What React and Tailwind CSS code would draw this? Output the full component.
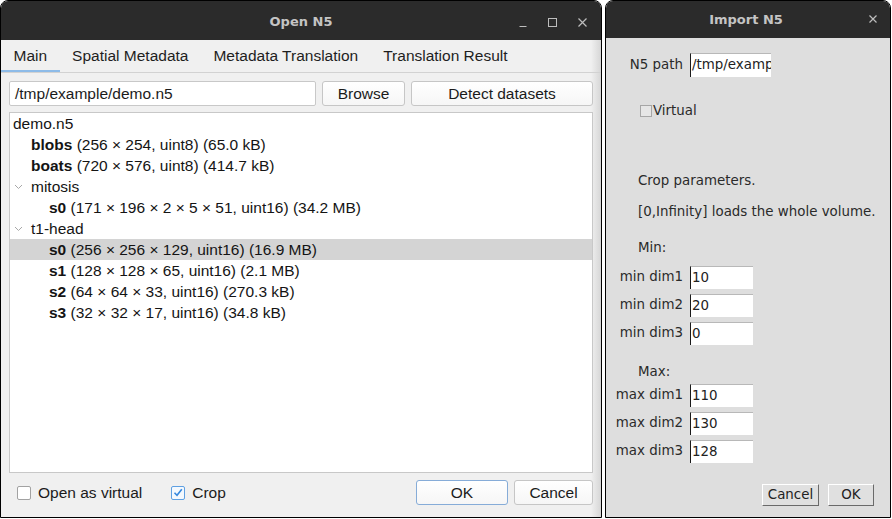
import React from 'react';

const TREE = [
  { level: 0, name: 'demo.n5' },
  { level: 1, bold: 'blobs', info: '(256 × 254, uint8) (65.0 kB)' },
  { level: 1, bold: 'boats', info: '(720 × 576, uint8) (414.7 kB)' },
  { level: 1, name: 'mitosis', chevron: true },
  { level: 2, bold: 's0', info: '(171 × 196 × 2 × 5 × 51, uint16) (34.2 MB)' },
  { level: 1, name: 't1-head', chevron: true },
  { level: 2, bold: 's0', info: '(256 × 256 × 129, uint16) (16.9 MB)', selected: true },
  { level: 2, bold: 's1', info: '(128 × 128 × 65, uint16) (2.1 MB)' },
  { level: 2, bold: 's2', info: '(64 × 64 × 33, uint16) (270.3 kB)' },
  { level: 2, bold: 's3', info: '(32 × 32 × 17, uint16) (34.8 kB)' },
];

const TABS = ['Main', 'Spatial Metadata', 'Metadata Translation', 'Translation Result'];

const MIN = [['min dim1', '10'], ['min dim2', '20'], ['min dim3', '0']];
const MAX = [['max dim1', '110'], ['max dim2', '130'], ['max dim3', '128']];

function Chevron() {
  return (
    <svg width="9" height="6" viewBox="0 0 9 6" className="ml-px">
      <path d="M1 1 L4.5 4.5 L8 1" fill="none" stroke="#a8a8a8" strokeWidth="1" />
    </svg>
  );
}

function QtButton({ children, className = '' }) {
  return (
    <button className={`h-full rounded-[3px] border bg-gradient-to-b from-white to-[#f6f6f6] text-[#1b1b1b] ${className}`}>
      {children}
    </button>
  );
}

function AwtField({ value, width = 'w-[63px]' }) {
  return (
    <div className={`${width} h-full bg-white border-l-[1.5px] border-l-[#1a1a1a] border-t border-t-[#b8b8b8] pl-[1px] flex items-center overflow-hidden whitespace-nowrap text-[#222]`}>
      {value}
    </div>
  );
}

function AwtButton({ children, className = '' }) {
  return (
    <button className={`h-full bg-[#e0e0e0] border-t border-l border-t-white border-l-white border-b-[1.5px] border-r-[1.5px] border-b-[#6a6a6a] border-r-[#6a6a6a] text-[#222] ${className}`}>
      {children}
    </button>
  );
}

function AwtRow({ label, value, width }) {
  return (
    <div className="h-[23px] flex items-center">
      <span className="w-[84px] text-right pr-[7px]">{label}</span>
      <AwtField value={value} width={width} />
    </div>
  );
}

export default function App() {
  return (
    <div className="w-[892px] h-[519px] bg-white flex gap-[3px] overflow-hidden">
      {/* Open N5 (Qt) */}
      <div className="w-[602px] h-[518px] border border-black rounded-t-[8px] overflow-hidden flex flex-col font-['Liberation_Sans',sans-serif] text-[15.5px]">
        <div className="h-[39px] shrink-0 bg-[#2b2b2b] relative flex items-center justify-center">
          <span className="font-['DejaVu_Sans',sans-serif] font-bold text-[13px] text-[#c4c4c4] mt-[2px]">Open N5</span>
          <div className="absolute right-[14px] top-[16px] flex items-center gap-[21px]">
            <svg width="8" height="10" viewBox="0 0 8 10"><path d="M0.5 9.5 H7.5" stroke="#bdbdbd" strokeWidth="1.2" /></svg>
            <svg width="9" height="9" viewBox="0 0 9 9"><rect x="0.5" y="0.5" width="8" height="8" fill="none" stroke="#bdbdbd" strokeWidth="1" /></svg>
            <svg width="9" height="9" viewBox="0 0 9 9"><path d="M0.5 0.5 L8.5 8.5 M8.5 0.5 L0.5 8.5" stroke="#bdbdbd" strokeWidth="1.2" /></svg>
          </div>
        </div>

        <div className="flex-1 flex flex-col bg-[linear-gradient(to_right,#f0f0f0_590px,#d6d6d6_600px)]">
          {/* Tabs */}
          <div className="h-[33px] shrink-0 flex border-b border-[#d2d2d2]">
            {TABS.map((t, i) => (
              <div key={t} className={`px-[12.5px] flex items-center text-[#1e1e1e] ${i === 0 ? 'border-b-2 border-[#8dbbe8] pt-[2px]' : ''}`}>
                {t}
              </div>
            ))}
          </div>

          <div className="pl-[8px] pr-[8px] flex flex-col flex-1">
            {/* Path row */}
            <div className="mt-[8px] h-[25px] flex gap-[6px]">
              <div className="w-[307px] h-full bg-white border border-[#c8c8c8] rounded-[2px] px-[5px] flex items-center text-[#1b1b1b]">
                /tmp/example/demo.n5
              </div>
              <QtButton className="w-[83px] border-[#c6c6c6]">Browse</QtButton>
              <QtButton className="w-[182px] border-[#c6c6c6]">Detect datasets</QtButton>
            </div>

            {/* Tree */}
            <div className="mt-[6px] h-[361px] bg-white border border-[#c8c8c8]">
              {TREE.map((r, i) => (
                <div key={i} className={`h-[21px] flex items-center pl-[3px] whitespace-nowrap text-[#141414] ${r.selected ? 'bg-[#d4d4d4]' : ''}`}>
                  {r.level === 1 && (
                    <span className="w-[18px] flex items-center">{r.chevron && <Chevron />}</span>
                  )}
                  {r.level === 2 && <span className="w-[36px]" />}
                  {r.bold ? (
                    <span>
                      <b>{r.bold}</b> {r.info}
                    </span>
                  ) : (
                    <span>{r.name}</span>
                  )}
                </div>
              ))}
            </div>

            {/* Bottom row */}
            <div className="mt-[7px] h-[25px] flex items-center">
              <div className="flex items-center pl-[8px]">
                <span className="w-[14px] h-[14px] rounded-[2px] border border-[#a2a2a2] bg-white" />
                <span className="ml-[7px] text-[#1b1b1b]">Open as virtual</span>
              </div>
              <div className="flex items-center ml-[29px]">
                <span className="w-[14px] h-[14px] rounded-[2px] border border-[#5fa0e2] bg-[#f4f9fe] flex items-center justify-center">
                  <svg width="10" height="9" viewBox="0 0 10 9">
                    <path d="M1.5 4.8 L4 7.3 L8.8 1.2" fill="none" stroke="#3688de" strokeWidth="1.6" />
                  </svg>
                </span>
                <span className="ml-[7px] text-[#1b1b1b]">Crop</span>
              </div>
              <div className="flex-1" />
              <div className="flex h-full gap-[6px]">
                <QtButton className="w-[92px] border-[#86acd8]">OK</QtButton>
                <QtButton className="w-[79px] border-[#c6c6c6]">Cancel</QtButton>
              </div>
            </div>
          </div>
        </div>
      </div>

      {/* Import N5 (AWT) */}
      <div className="w-[286px] h-[518px] border border-black rounded-t-[8px] overflow-hidden flex flex-col font-['DejaVu_Sans',sans-serif] text-[13.4px] text-[#2a2a2a]">
        <div className="h-[37px] shrink-0 bg-[#2b2b2b] relative flex items-center justify-center">
          <span className="font-bold text-[13px] text-[#c4c4c4] ml-[-4px]">Import N5</span>
          <svg width="8" height="8" viewBox="0 0 8 8" className="absolute right-[13px] top-[14px]">
            <path d="M0.5 0.5 L7.5 7.5 M7.5 0.5 L0.5 7.5" stroke="#bdbdbd" strokeWidth="1.2" />
          </svg>
        </div>

        <div className="flex-1 bg-[#dedede] flex flex-col">
          <div className="mt-[15px] h-[24px] flex items-center">
            <span className="w-[84px] text-right pr-[7px]">N5 path</span>
            <AwtField value="/tmp/example/demo.n5" width="w-[81px]" />
          </div>

          <div className="mt-[24px] h-[20px] flex items-center pl-[34px]">
            <span className="w-[12px] h-[12px] border border-[#a6a6a6] bg-[#e6e6e6]" />
            <span className="ml-[1px]">Virtual</span>
          </div>

          <div className="mt-[50px] h-[20px] flex items-center pl-[32px]">Crop parameters.</div>
          <div className="mt-[11px] h-[20px] flex items-center pl-[32px]">[0,Infinity] loads the whole volume.</div>
          <div className="mt-[16px] h-[20px] flex items-center pl-[32px]">Min:</div>

          <div className="mt-[8px] flex flex-col gap-[5px]">
            {MIN.map(([l, v]) => <AwtRow key={l} label={l} value={v} />)}
          </div>

          <div className="mt-[17px] h-[20px] flex items-center pl-[32px]">Max:</div>

          <div className="mt-[2px] flex flex-col gap-[5px]">
            {MAX.map(([l, v]) => <AwtRow key={l} label={l} value={v} />)}
          </div>

          <div className="mt-[21px] h-[22px] flex justify-end gap-[9px] pr-[16px]">
            <AwtButton className="w-[57px]">Cancel</AwtButton>
            <AwtButton className="w-[46px]">OK</AwtButton>
          </div>
        </div>
      </div>
    </div>
  );
}
